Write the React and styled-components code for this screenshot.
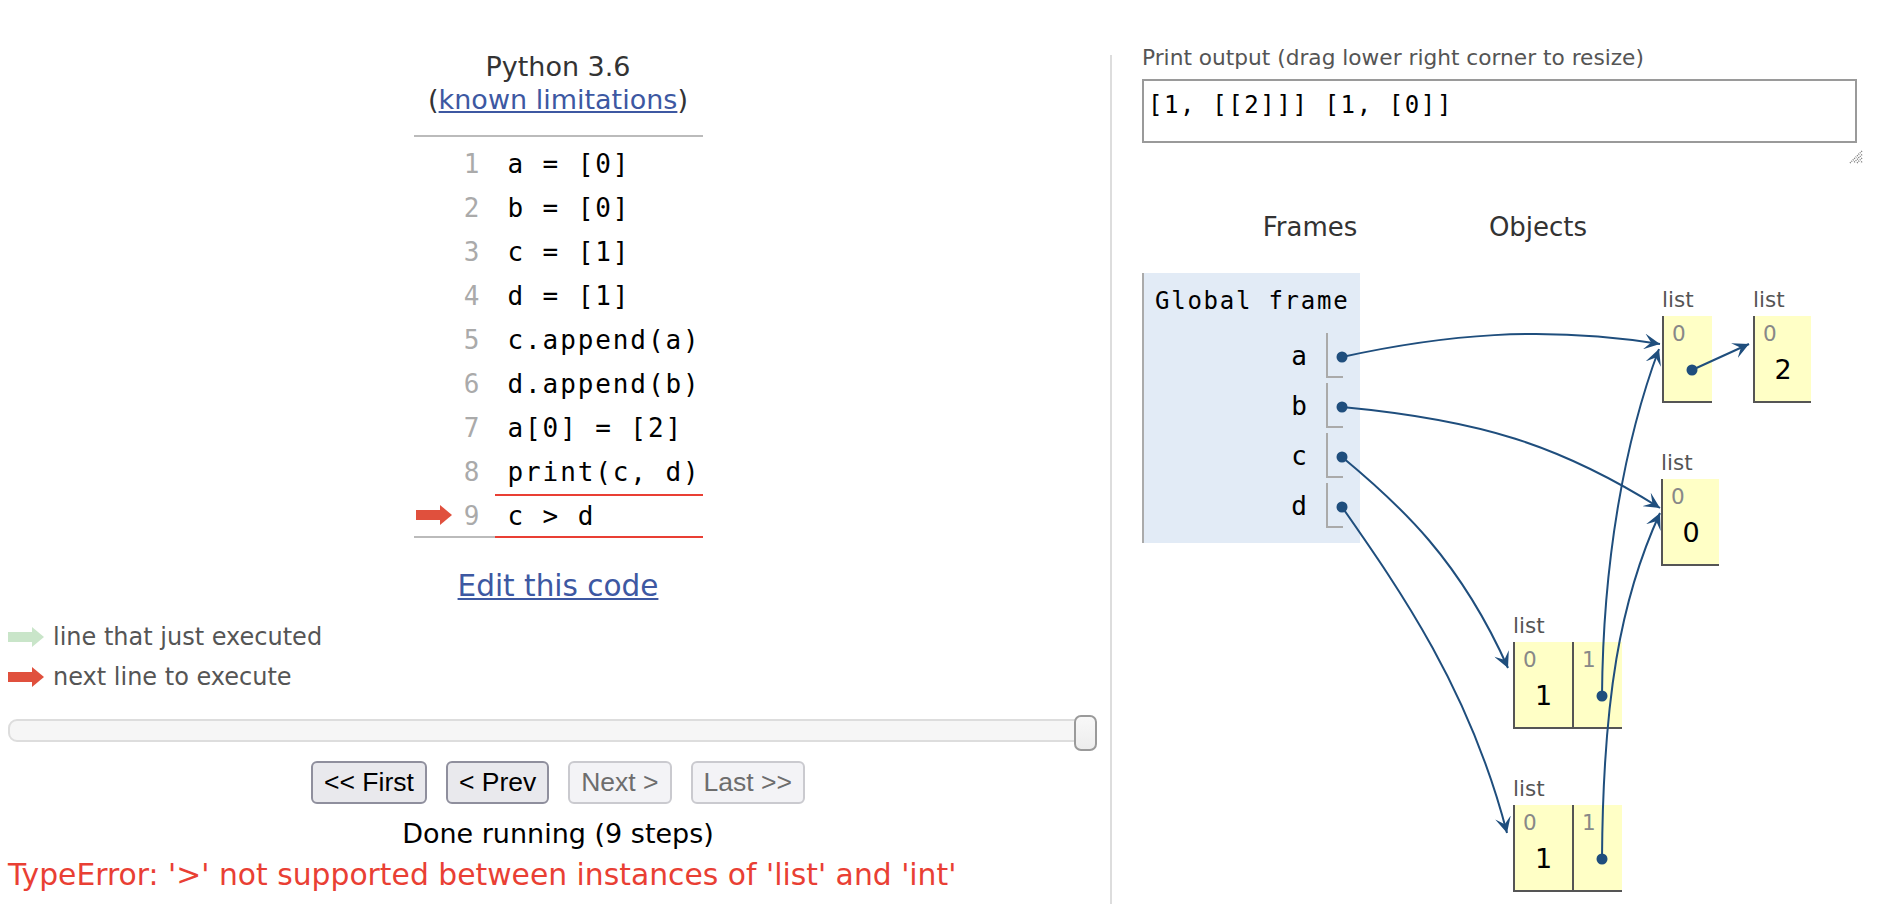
import React from "react";
import styled, { createGlobalStyle } from "styled-components";

const SANS = `"DejaVu Sans", Verdana, sans-serif`;
const MONO = `"DejaVu Sans Mono", monospace`;
const LINK = "#3d58a2";
const RED = "#e93f34";
const ARROW_RED = "#e0503d";
const ARROW_GREEN = "#c9e5c9";
const POINTER = "#1f4e7d";

const GlobalStyle = createGlobalStyle`
  html, body {
    margin: 0;
    padding: 0;
    background: #fff;
    font-family: ${SANS};
  }
`;

const Page = styled.div`
  display: flex;
  width: 1886px;
  height: 904px;
  overflow: hidden;
`;

const LeftPane = styled.div`
  width: 1100px;
  margin-left: 8px;
  padding-top: 50px;
  display: flex;
  flex-direction: column;
  align-items: center;
`;

const Header = styled.div`
  font-size: 27px;
  line-height: 33px;
  color: #333;
  text-align: center;
`;

const Link = styled.a`
  color: ${LINK};
  text-decoration: underline;
`;

const CodeTable = styled.div`
  margin-top: 19px;
  border-top: 2px solid #bbb;
  padding-top: 5px;
  display: flex;
  flex-direction: column;
`;

const CodeRow = styled.div`
  display: flex;
  height: 44px;
`;

const ArrowCell = styled.div`
  width: 42px;
  box-sizing: border-box;
  padding-left: 2px;
  display: flex;
  align-items: center;
  border-bottom: ${(p) => (p.$last ? "2px solid #bbb" : "none")};
`;

const LineNo = styled.div`
  width: 39px;
  box-sizing: border-box;
  padding-right: 15px;
  text-align: right;
  font-family: ${MONO};
  font-size: 26px;
  line-height: 44px;
  color: #aaa;
  border-bottom: ${(p) => (p.$last ? "2px solid #bbb" : "none")};
`;

const CodeCell = styled.div`
  width: 208px;
  box-sizing: border-box;
  padding-left: 13px;
  font-family: ${MONO};
  font-size: 26px;
  letter-spacing: 1.9px;
  color: #000;
  white-space: pre;
  display: flex;
  align-items: center;
  border-top: 2px solid ${(p) => (p.$current ? RED : "transparent")};
  border-bottom: 2px solid ${(p) => (p.$current ? RED : "transparent")};
`;

const EditLink = styled(Link)`
  margin-top: 31px;
  font-size: 29.5px;
  line-height: 35px;
`;

const Legend = styled.div`
  align-self: stretch;
  margin-top: 13px;
  font-size: 24px;
  line-height: 40px;
  color: #555;
`;

const LegendRow = styled.div`
  display: flex;
  align-items: center;
  gap: 9px;
`;

const Slider = styled.div`
  align-self: stretch;
  position: relative;
  height: 36px;
  margin-top: 18px;
  margin-right: 11px;
`;

const Track = styled.div`
  margin-top: 4px;
  height: 23px;
  box-sizing: border-box;
  margin-right: 3px;
  background: #f6f6f6;
  border: 2px solid #ddd;
  border-radius: 9px;
`;

const Thumb = styled.div`
  position: absolute;
  right: 0;
  top: 0;
  width: 23px;
  height: 36px;
  box-sizing: border-box;
  background: linear-gradient(#f8f8f8, #ededed);
  border: 2px solid #9a9a9a;
  border-radius: 7px;
`;

const ButtonRow = styled.div`
  margin-top: 10px;
  display: flex;
  gap: 19px;
`;

const NavButton = styled.button`
  height: 43px;
  box-sizing: border-box;
  padding: 0 11px;
  font-family: "Liberation Sans", Arial, sans-serif;
  font-size: 26.5px;
  border-radius: 6px;
  border: 2px solid ${(p) => (p.disabled ? "#cacacf" : "#8f8f9d")};
  background: ${(p) => (p.disabled ? "#f3f3f6" : "#e9e9ed")};
  color: ${(p) => (p.disabled ? "#6d6d6d" : "#000")};
`;

const Status = styled.div`
  margin-top: 14px;
  font-size: 27px;
  line-height: 32px;
  color: #000;
`;

const ErrorMsg = styled.div`
  align-self: stretch;
  margin-top: 7px;
  font-size: 29.8px;
  line-height: 36px;
  color: ${RED};
`;

const Divider = styled.div`
  width: 2px;
  margin-left: 2px;
  margin-top: 55px;
  background: #ddd;
`;

const RightPane = styled.div`
  flex: 1;
  padding-left: 30px;
  padding-top: 45px;
  display: flex;
  flex-direction: column;
`;

const OutputLabel = styled.div`
  font-size: 21.7px;
  line-height: 26px;
  color: #555;
`;

const OutputBox = styled.div`
  margin-top: 8px;
  width: 715px;
  height: 64px;
  box-sizing: border-box;
  border: 2px solid #9a9a9a;
  padding: 9px 0 0 4px;
  font-family: ${MONO};
  font-size: 24px;
  line-height: 30px;
  letter-spacing: 1.6px;
  white-space: pre;
`;

const GripRow = styled.div`
  width: 715px;
  height: 21px;
  display: flex;
  justify-content: flex-end;
  align-items: flex-end;
`;

const VizHeaders = styled.div`
  margin-top: 47px;
  display: flex;
  font-size: 26px;
  line-height: 33px;
  color: #333;
`;

const VizHead = styled.div`
  width: ${(p) => p.$w}px;
  text-align: center;
`;

const Diagram = styled.div`
  position: relative;
  margin-top: 29px;
  width: 715px;
  height: 631px;
`;

const FrameBox = styled.div`
  width: 218px;
  box-sizing: border-box;
  background: #e2ebf6;
  border-left: 2px solid #aaa;
  padding: 13px 0 15px 11px;
`;

const FrameTitle = styled.div`
  font-family: ${MONO};
  font-size: 24px;
  line-height: 30px;
  letter-spacing: 1.75px;
  margin-bottom: 17px;
`;

const VarList = styled.div`
  display: flex;
  flex-direction: column;
  gap: 5px;
`;

const VarRow = styled.div`
  display: flex;
  align-items: center;
  height: 45px;
`;

const VarName = styled.div`
  width: 152px;
  text-align: right;
  font-family: ${MONO};
  font-size: 26px;
`;

const VarSlot = styled.div`
  margin-left: 19px;
  width: 17px;
  height: 45px;
  box-sizing: border-box;
  border-left: 2px solid #aaa;
  border-bottom: 2px solid #aaa;
`;

const HeapNode = styled.div`
  position: absolute;
  left: ${(p) => p.$x}px;
  top: ${(p) => p.$y}px;
`;

const TypeLabel = styled.div`
  font-size: 21.5px;
  line-height: 24px;
  color: #555;
  margin-bottom: 4px;
`;

const ListBox = styled.div`
  display: flex;
  background: #ffffc6;
`;

const ListCell = styled.div`
  width: ${(p) => p.$w}px;
  height: 87px;
  box-sizing: border-box;
  border-left: 2px solid #555;
  border-bottom: 2px solid #555;
  display: flex;
  flex-direction: column;
`;

const CellIndex = styled.div`
  padding: 6px 0 0 8px;
  font-size: 21.5px;
  line-height: 24px;
  color: #888;
`;

const CellValue = styled.div`
  margin-top: 8px;
  text-align: center;
  font-size: 27px;
  line-height: 32px;
  color: #000;
`;

const ArrowLayer = styled.svg`
  position: absolute;
  left: 0;
  top: 0;
  overflow: visible;
  pointer-events: none;
`;

const StepArrow = ({ color }) => (
  <svg width="36" height="20" viewBox="0 0 36 20">
    <rect x="0" y="5" width="25" height="10" fill={color} />
    <polygon points="24,0 36,10 24,20" fill={color} />
  </svg>
);

const Grip = () => (
  <svg width="15" height="15" viewBox="0 0 15 15" style={{ marginRight: -6 }}>
    {[0, 1, 2, 3].map((i) => (
      <line
        key={i}
        x1={14}
        y1={2 + i * 3.5}
        x2={2 + i * 3.5}
        y2={14}
        stroke="#777"
        strokeWidth="1.4"
        strokeDasharray="1 1"
      />
    ))}
  </svg>
);

const codeLines = [
  "a = [0]",
  "b = [0]",
  "c = [1]",
  "d = [1]",
  "c.append(a)",
  "d.append(b)",
  "a[0] = [2]",
  "print(c, d)",
  "c > d",
];

const vars = ["a", "b", "c", "d"];

const heap = [
  { id: "l1", x: 520, y: 15, cells: [{ w: 50 }] },
  { id: "l2", x: 611, y: 15, cells: [{ w: 58, v: "2" }] },
  { id: "l3", x: 519, y: 178, cells: [{ w: 58, v: "0" }] },
  { id: "l4", x: 371, y: 341, cells: [{ w: 59, v: "1" }, { w: 50 }] },
  { id: "l5", x: 371, y: 504, cells: [{ w: 59, v: "1" }, { w: 50 }] },
];

const dots = [
  [200, 84],
  [200, 134],
  [200, 184],
  [200, 234],
  [550, 97],
  [460, 423],
  [460, 586],
];

const links = [
  "M200,84 C300,62 400,52 518,71",
  "M200,134 C338,147 418,172 518,235",
  "M200,184 C258,232 318,287 366,395",
  "M200,234 C258,317 328,417 365,560",
  "M460,423 C461,287 483,167 517,76",
  "M460,586 C461,427 478,327 518,240",
  "M550,97 L607,71",
];

const App = () => {
  return (
    <>
      <GlobalStyle />
      <Page>
        <LeftPane>
          <Header>
            <div>Python 3.6</div>
            <div>
              (<Link href="#">known limitations</Link>)
            </div>
          </Header>
          <CodeTable>
            {codeLines.map((code, i) => {
              const last = i === codeLines.length - 1;
              return (
                <CodeRow key={i}>
                  <ArrowCell $last={last}>
                    {last && <StepArrow color={ARROW_RED} />}
                  </ArrowCell>
                  <LineNo $last={last}>{i + 1}</LineNo>
                  <CodeCell $current={last}>{code}</CodeCell>
                </CodeRow>
              );
            })}
          </CodeTable>
          <EditLink href="#">Edit this code</EditLink>
          <Legend>
            <LegendRow>
              <StepArrow color={ARROW_GREEN} />
              <span>line that just executed</span>
            </LegendRow>
            <LegendRow>
              <StepArrow color={ARROW_RED} />
              <span>next line to execute</span>
            </LegendRow>
          </Legend>
          <Slider>
            <Track />
            <Thumb />
          </Slider>
          <ButtonRow>
            <NavButton>&lt;&lt; First</NavButton>
            <NavButton>&lt; Prev</NavButton>
            <NavButton disabled>Next &gt;</NavButton>
            <NavButton disabled>Last &gt;&gt;</NavButton>
          </ButtonRow>
          <Status>Done running (9 steps)</Status>
          <ErrorMsg>
            TypeError: '&gt;' not supported between instances of 'list' and
            'int'
          </ErrorMsg>
        </LeftPane>
        <Divider />
        <RightPane>
          <OutputLabel>
            Print output (drag lower right corner to resize)
          </OutputLabel>
          <OutputBox>[1, [[2]]] [1, [0]]</OutputBox>
          <GripRow>
            <Grip />
          </GripRow>
          <VizHeaders>
            <VizHead $w={336}>Frames</VizHead>
            <VizHead $w={120}>Objects</VizHead>
          </VizHeaders>
          <Diagram>
            <FrameBox>
              <FrameTitle>Global frame</FrameTitle>
              <VarList>
                {vars.map((v) => (
                  <VarRow key={v}>
                    <VarName>{v}</VarName>
                    <VarSlot />
                  </VarRow>
                ))}
              </VarList>
            </FrameBox>
            {heap.map((node) => (
              <HeapNode key={node.id} $x={node.x} $y={node.y}>
                <TypeLabel>list</TypeLabel>
                <ListBox>
                  {node.cells.map((c, i) => (
                    <ListCell key={i} $w={c.w}>
                      <CellIndex>{i}</CellIndex>
                      {c.v && <CellValue>{c.v}</CellValue>}
                    </ListCell>
                  ))}
                </ListBox>
              </HeapNode>
            ))}
            <ArrowLayer width="715" height="631">
              <defs>
                <marker
                  id="tip"
                  markerWidth="17"
                  markerHeight="16"
                  refX="16"
                  refY="8"
                  orient="auto"
                  markerUnits="userSpaceOnUse"
                >
                  <path d="M0,0 L16,8 L0,16 L7,8 Z" fill={POINTER} />
                </marker>
              </defs>
              {links.map((d, i) => (
                <path
                  key={i}
                  d={d}
                  fill="none"
                  stroke={POINTER}
                  strokeWidth="2"
                  markerEnd="url(#tip)"
                />
              ))}
              {dots.map(([x, y], i) => (
                <circle key={i} cx={x} cy={y} r="5.5" fill={POINTER} />
              ))}
            </ArrowLayer>
          </Diagram>
        </RightPane>
      </Page>
    </>
  );
};

export default App;
